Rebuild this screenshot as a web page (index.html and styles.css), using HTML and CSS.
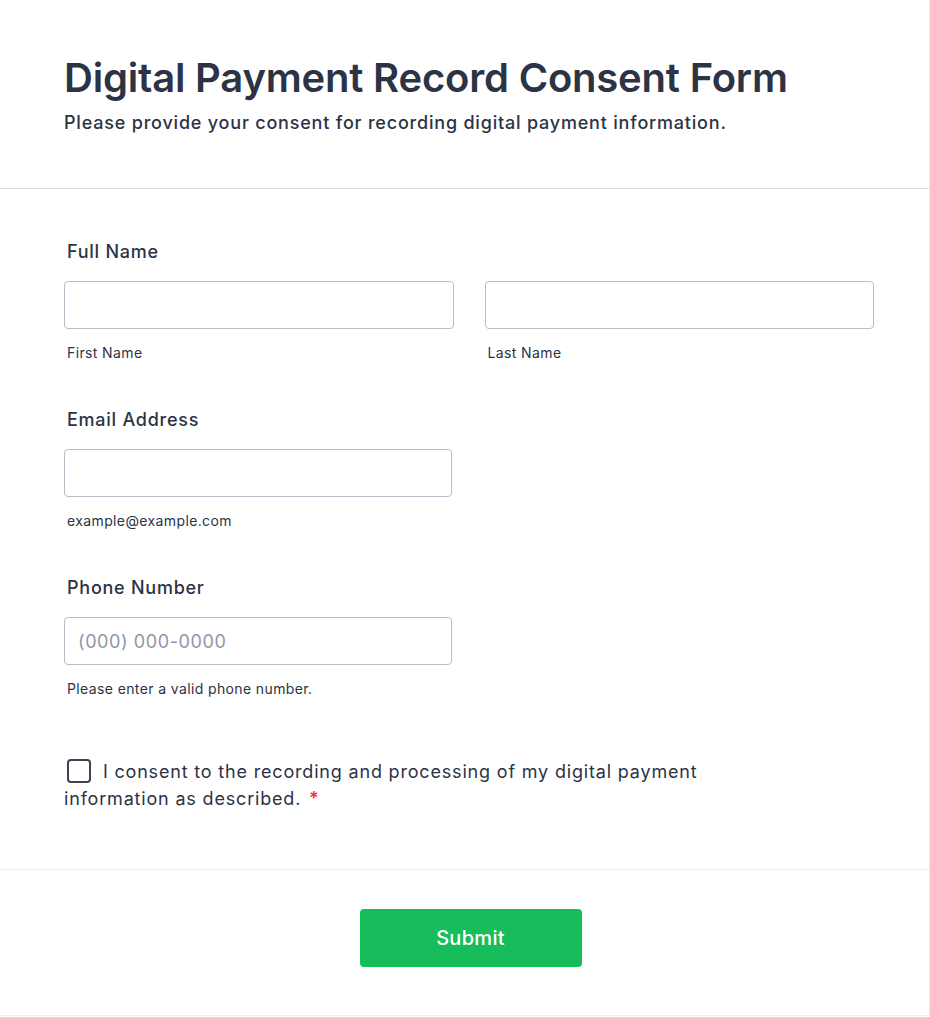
FILE: index.html
```html
<!DOCTYPE html>
<html lang="en">
<head>
<meta charset="utf-8">
<title>Digital Payment Record Consent Form</title>
<link rel="stylesheet" href="styles.css">
</head>
<body>
<div class="card">
  <header class="head">
    <h1 class="title">Digital Payment Record Consent Form</h1>
    <p class="subtitle">Please provide your consent for recording digital payment information.</p>
  </header>
  <form class="body">
    <div class="field">
      <label class="label">Full Name</label>
      <div class="row">
        <div class="col">
          <input class="input" type="text">
          <span class="sub">First Name</span>
        </div>
        <div class="col">
          <input class="input" type="text">
          <span class="sub">Last Name</span>
        </div>
      </div>
    </div>
    <div class="field">
      <label class="label">Email Address</label>
      <div class="col narrow">
        <input class="input" type="text">
        <span class="sub">example@example.com</span>
      </div>
    </div>
    <div class="field">
      <label class="label">Phone Number</label>
      <div class="col narrow">
        <input class="input" type="text" placeholder="(000) 000-0000">
        <span class="sub">Please enter a valid phone number.</span>
      </div>
    </div>
    <div class="consent">
      <span class="box"></span> I consent to the recording and processing of my digital payment information as described. <span class="req">*</span>
    </div>
  </form>
  <footer class="foot">
    <button class="submit" type="button">Submit</button>
  </footer>
</div>
</body>
</html>
```
FILE: styles.css
```css
* { box-sizing: border-box; }
html, body { margin: 0; padding: 0; background: #ffffff; }
body { font-family: Inter, "Noto Sans", sans-serif; color: #2c3345; }
.card {
  width: 930px;
  height: 1016px;
  border-right: 1px solid #ededf2;
  border-bottom: 1px solid #ededf2;
  background: #fff;
}
.head {
  padding: 54px 64px 52px;
  border-bottom: 1px solid #dcdce4;
}
.title {
  margin: 0;
  font-size: 40px;
  line-height: 48px;
  font-weight: 600;
  color: #2c3345;
  letter-spacing: -0.2px;
}
.subtitle {
  margin: 8px 0 0;
  font-size: 18px;
  line-height: 26px;
  font-weight: 500;
  letter-spacing: 0.8px;
  color: #2c3345;
}
.body {
  padding: 50px 55px 57px 64px;
  border-bottom: 1px solid #ececf3;
  margin: 0;
}
.field { margin-bottom: 46px; }
.label {
  display: block;
  padding-left: 3px;
  font-size: 18px;
  line-height: 26px;
  font-weight: 500;
  letter-spacing: 0.75px;
  margin-bottom: 16px;
}
.row { display: flex; gap: 31px; }
.col { display: flex; flex-direction: column; width: 390px; }
.col.narrow { width: 388px; }
.input {
  height: 48px;
  width: 100%;
  border: 1px solid #b8bdc9;
  border-radius: 4px;
  font-family: Inter, sans-serif;
  font-size: 18px;
  letter-spacing: 0.6px;
  padding: 0 13px;
  color: #2c3345;
  background: #fff;
}
.input::placeholder { color: #8f96a8; }
.sub {
  margin-top: 16px;
  padding-left: 3px;
  font-size: 14px;
  line-height: 16px;
  letter-spacing: 0.38px;
  color: #2c3345;
}
.consent {
  margin-top: 61px;
  width: 680px;
  font-size: 18px;
  line-height: 27px;
  letter-spacing: 0.82px;
  color: #2c3345;
}
.box {
  display: inline-block;
  width: 24px;
  height: 24px;
  border: 2px solid #3d4150;
  border-radius: 4px;
  vertical-align: -5px;
  margin-left: 3px;
  margin-right: 6px;
}
.req { color: #f23a3c; font-weight: 600; margin-left: 2px; }
.foot {
  display: flex;
  justify-content: center;
  padding: 39px 0 0 12px;
}
.submit {
  width: 222px;
  height: 58px;
  background: #18bd5b;
  border: none;
  border-radius: 4px;
  color: #fff;
  font-family: Inter, sans-serif;
  font-size: 20px;
  font-weight: 500;
  letter-spacing: 0.3px;
}
```
